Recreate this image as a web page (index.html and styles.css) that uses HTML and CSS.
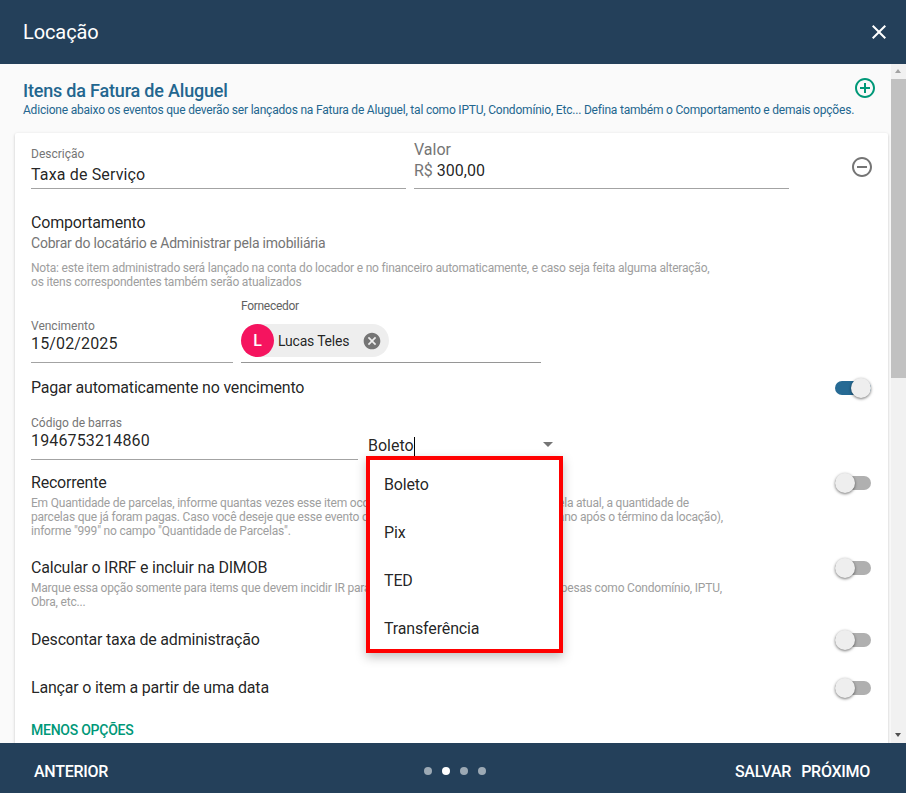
FILE: index.html
```html
<!DOCTYPE html>
<html lang="pt-BR">
<head>
<meta charset="utf-8">
<title>Locação</title>
<link rel="stylesheet" href="styles.css">
</head>
<body>
<div class="dialog">
  <header class="topbar">
    <h1 class="topbar-title">Locação</h1>
    <svg class="close-icon" viewBox="0 0 24 24" width="24" height="24"><path fill="#fff" d="M19 6.41 17.59 5 12 10.59 6.41 5 5 6.41 10.59 12 5 17.59 6.41 19 12 13.41 17.59 19 19 17.59 13.41 12z"/></svg>
  </header>
  <div class="middle">
    <main class="content">
      <div class="intro">
        <div class="intro-text">
          <h2 class="intro-title">Itens da Fatura de Aluguel</h2>
          <p class="intro-sub">Adicione abaixo os eventos que deverão ser lançados na Fatura de Aluguel, tal como IPTU, Condomínio, Etc... Defina também o Comportamento e demais opções.</p>
        </div>
        <svg class="add-icon" viewBox="0 0 24 24" width="24" height="24"><path fill="#009878" d="M13 7h-2v4H7v2h4v4h2v-4h4v-2h-4V7zm-1-5C6.48 2 2 6.48 2 12s4.48 10 10 10 10-4.48 10-10S17.52 2 12 2zm0 18c-4.41 0-8-3.59-8-8s3.59-8 8-8 8 3.59 8 8-3.59 8-8 8z"/></svg>
      </div>
      <section class="card">
        <div class="row-top">
          <div class="field field-desc">
            <span class="label">Descrição</span>
            <span class="value">Taxa de Serviço</span>
          </div>
          <div class="field field-valor">
            <span class="label-large">Valor</span>
            <span class="value"><span class="prefix">R$</span> 300,00</span>
          </div>
          <svg class="remove-icon" viewBox="0 0 24 24" width="24" height="24"><path fill="#757575" d="M7 11v2h10v-2H7zm5-9C6.48 2 2 6.48 2 12s4.48 10 10 10 10-4.48 10-10S17.52 2 12 2zm0 18c-4.41 0-8-3.59-8-8s3.59-8 8-8 8 3.59 8 8-3.59 8-8 8z"/></svg>
        </div>

        <div class="behaviour">
          <div class="item-title">Comportamento</div>
          <div class="behaviour-sub">Cobrar do locatário e Administrar pela imobiliária</div>
          <p class="note note-behaviour">Nota: este item administrado será lançado na conta do locador e no financeiro automaticamente, e caso seja feita alguma alteração,<br>os itens correspondentes também serão atualizados</p>
        </div>

        <div class="row-dates">
          <div class="field field-date">
            <span class="label">Vencimento</span>
            <span class="value">15/02/2025</span>
          </div>
          <div class="field-supplier">
            <span class="label-plain">Fornecedor</span>
            <div class="chip-line">
              <span class="chip">
                <span class="avatar">L</span>
                <span class="chip-text">Lucas Teles</span>
                <svg class="chip-x" viewBox="0 0 24 24" width="20" height="20"><path fill="#757575" d="M12 2C6.47 2 2 6.47 2 12s4.47 10 10 10 10-4.47 10-10S17.53 2 12 2zm5 13.59L15.59 17 12 13.41 8.41 17 7 15.59 10.59 12 7 8.41 8.41 7 12 10.59 15.59 7 17 8.41 13.41 12 17 15.59z"/></svg>
              </span>
            </div>
          </div>
        </div>

        <div class="toggle-row toggle-row-pay">
          <span class="item-title">Pagar automaticamente no vencimento</span>
          <span class="toggle toggle-on"><span class="thumb"></span></span>
        </div>

        <div class="row-barcode">
          <div class="field field-barcode">
            <span class="label">Código de barras</span>
            <span class="value">1946753214860</span>
          </div>
          <div class="select-box">
            <span class="select-text">Boleto</span><span class="caret"></span>
            <span class="select-arrow"></span>
            <ul class="menu">
              <li class="menu-item">Boleto</li>
              <li class="menu-item">Pix</li>
              <li class="menu-item">TED</li>
              <li class="menu-item">Transferência</li>
            </ul>
          </div>
        </div>

        <div class="toggle-block block-recurring">
          <div class="block-head">
            <span class="item-title">Recorrente</span>
            <span class="toggle"><span class="thumb"></span></span>
          </div>
          <p class="note">Em Quantidade de parcelas, informe quantas vezes esse item ocorrerá durante a sua locação. Em Parcela atual, a quantidade de<br>parcelas que já foram pagas. Caso você deseje que esse evento ocorra indefinidamente (mesmo já no ano após o término da locação),<br>informe "999" no campo "Quantidade de Parcelas".</p>
        </div>

        <div class="toggle-block block-irrf">
          <div class="block-head">
            <span class="item-title">Calcular o IRRF e incluir na DIMOB</span>
            <span class="toggle"><span class="thumb"></span></span>
          </div>
          <p class="note">Marque essa opção somente para items que devem incidir IR para o locador ou locatário, excluindo despesas como Condomínio, IPTU,<br>Obra, etc...</p>
        </div>

        <div class="toggle-row toggle-row-discount">
          <span class="item-title">Descontar taxa de administração</span>
          <span class="toggle"><span class="thumb"></span></span>
        </div>
        <div class="toggle-row toggle-row-date">
          <span class="item-title">Lançar o item a partir de uma data</span>
          <span class="toggle"><span class="thumb"></span></span>
        </div>
        <div class="less-options">MENOS OPÇÕES</div>
      </section>
    </main>
    <div class="scrollbar">
      <span class="scroll-up"></span>
      <span class="scroll-thumb"></span>
      <span class="scroll-down"></span>
    </div>
  </div>
  <footer class="bottombar">
    <span class="btn">ANTERIOR</span>
    <div class="dots">
      <span class="dot"></span>
      <span class="dot dot-active"></span>
      <span class="dot"></span>
      <span class="dot"></span>
    </div>
    <div class="actions">
      <span class="btn">SALVAR</span>
      <span class="btn">PRÓXIMO</span>
    </div>
  </footer>
</div>
</body>
</html>
```
FILE: styles.css
```css
* { box-sizing: border-box; }
html, body { margin: 0; height: 100%; overflow: hidden; }
body { font-family: Roboto, "Liberation Sans", sans-serif; color: rgba(0,0,0,.87); background: #fafafa; }
p, h1, h2, ul { margin: 0; padding: 0; }

.dialog { display: flex; flex-direction: column; height: 793px; }

.topbar { flex: 0 0 64px; background: #24405a; color: #fff; display: flex; align-items: center; justify-content: space-between; padding: 0 15px 0 23px; }
.topbar-title { font-size: 20px; font-weight: 400; letter-spacing: -.1px; }
.close-icon { display: block; }

.middle { flex: 1; display: flex; min-height: 0; }
.content { flex: 1; min-width: 0; overflow: hidden; background: #fafafa; padding: 0 3px 0 15px; }

.intro { display: flex; justify-content: space-between; height: 69px; padding: 15px 14px 0 8px; position: relative; }
.intro-title { font-size: 18px; font-weight: 500; line-height: 24px; color: #23668f; letter-spacing: -.19px; }
.intro-sub { font-size: 12px; line-height: 14px; color: #23668f; white-space: nowrap; letter-spacing: -.205px; }
.add-icon { position: absolute; left: 838px; top: 12px; width: 24px; height: 24px; }

.card { background: #fff; padding: 0 17px 0 16px; box-shadow: 0 1px 3px rgba(0,0,0,.22); border-radius: 2px; height: 640px; }

.field { display: flex; flex-direction: column; border-bottom: 1px solid #a3a3a3; flex: none; }
.label { font-size: 12px; line-height: 14px; letter-spacing: 0; color: #757575; }
.label-large { font-size: 16px; line-height: 18px; color: #757575; }
.label-plain { font-size: 12px; line-height: 14px; color: #616161; display: block; letter-spacing: -.3px; }
.value { font-size: 16px; line-height: 22px; letter-spacing: .15px; color: rgba(0,0,0,.87); }
.prefix { color: #757575; }

.row-top { display: flex; align-items: flex-start; padding-top: 7px; height: 56px; position: relative; }
.field-desc { width: 375px; margin-right: 8px; height: 49px; padding-top: 7px; }
.field-desc .label { margin-bottom: 3px; }
.field-valor { width: 375px; height: 49px; padding-top: 1px; }
.field-valor .label-large { margin-bottom: 1px; }
.field-valor .value { letter-spacing: 0; }
.remove-icon { flex: none; margin-left: 61px; margin-top: 15px; }

.behaviour { padding-top: 24px; }
.item-title { font-size: 16px; line-height: 20px; color: rgba(0,0,0,.87); display: block; letter-spacing: -.2px; }
.behaviour-sub { font-size: 14px; line-height: 20px; color: #757575; letter-spacing: -.2px; }
.note { font-size: 12px; line-height: 14px; color: #9e9e9e; white-space: nowrap; letter-spacing: -.2px; }
.note-behaviour { margin-top: 8px; }

.row-dates { display: flex; align-items: flex-end; gap: 8px; height: 74px; }
.field-date { width: 202px; height: 44px; }
.field-supplier { width: 300px; flex: none; }
.label-plain { margin-bottom: 11px; }
.chip-line { border-bottom: 1px solid #969696; height: 39px; }
.chip { display: inline-flex; align-items: center; height: 33px; border-radius: 17px; background: #eee; padding-right: 7px; }
.avatar { width: 33px; height: 33px; border-radius: 50%; background: #f5145f; color: #fff; font-size: 16px; font-weight: 500; display: flex; align-items: center; justify-content: center; }
.chip-text { font-size: 14px; margin-left: 4px; color: rgba(0,0,0,.87); letter-spacing: -.2px; }
.chip-x { margin-left: 13px; }

.toggle-row { display: flex; align-items: center; justify-content: space-between; }
.toggle-row-pay { height: 20px; margin-top: 15px; }
.toggle-row-discount { height: 20px; margin-top: 21px; }
.toggle-row-date { height: 20px; margin-top: 28px; }

.toggle { position: relative; display: block; width: 36px; height: 14px; border-radius: 7px; background: #b0b0b0; flex: none; }
.thumb { position: absolute; top: -3px; left: 0; width: 20px; height: 20px; border-radius: 50%; background: #eee; box-shadow: 0 1px 3px rgba(0,0,0,.55); }
.toggle-on { background: #266a94; }
.toggle-on .thumb { left: 16px; }

.row-barcode { display: flex; align-items: flex-end; height: 47px; margin-top: 15px; gap: 10px; }
.field-barcode { width: 327px; height: 45px; padding-top: 1px; }
.select-box { position: relative; width: 186px; height: 30px; font-size: 16px; line-height: 22px; display: flex; color: rgba(0,0,0,.87); padding-top: 4px; margin-bottom: -1px; }
.caret { width: 1px; height: 19px; background: #000; margin-top: 2px; }
.select-arrow { position: absolute; left: 175px; top: 11px; width: 0; height: 0; border-left: 5px solid transparent; border-right: 5px solid transparent; border-top: 5px solid #757575; }
.menu { position: absolute; left: -2px; top: 25px; width: 197px; height: 197px; border: 4px solid #f00; padding-top: 1px; background: #fff; list-style: none; box-shadow: 0 4px 10px rgba(0,0,0,.25); z-index: 5; }
.menu-item { height: 48px; display: flex; align-items: center; padding-left: 14px; font-size: 16px; color: rgba(0,0,0,.87); letter-spacing: -.15px; }

.toggle-block { position: relative; }
.block-head { display: flex; align-items: center; justify-content: space-between; height: 20px; }
.block-recurring { margin-top: 13px; }
.block-recurring .note { margin-top: 3px; }
.block-irrf { margin-top: 20px; }
.block-irrf .note { margin-top: 3px; }

.less-options { font-size: 14px; font-weight: 500; line-height: 20px; color: #009878; margin-top: 22px; letter-spacing: -.25px; }

.scrollbar { flex: 0 0 15px; background: #f1f1f1; position: relative; }
.scroll-thumb { position: absolute; left: 0; right: 0; top: 15px; height: 299px; background: #c1c1c1; }
.scroll-up, .scroll-down { position: absolute; left: 4px; width: 0; height: 0; border-left: 3.5px solid transparent; border-right: 3.5px solid transparent; }
.scroll-up { top: 5px; border-bottom: 4px solid #a3a3a3; }
.scroll-down { bottom: 6px; border-top: 4px solid #505050; }

.bottombar { flex: 0 0 50px; background: #24405a; color: #fff; display: flex; align-items: center; justify-content: space-between; padding: 6px 36px 0 34px; position: relative; }
.btn { font-size: 16px; font-weight: 500; letter-spacing: -.28px; }
.dots { position: absolute; left: 424px; top: 24px; display: flex; gap: 10px; }
.dot { width: 8px; height: 8px; border-radius: 50%; background: rgba(255,255,255,.55); }
.dot-active { background: #fff; }
.actions { display: flex; gap: 10px; }
```
